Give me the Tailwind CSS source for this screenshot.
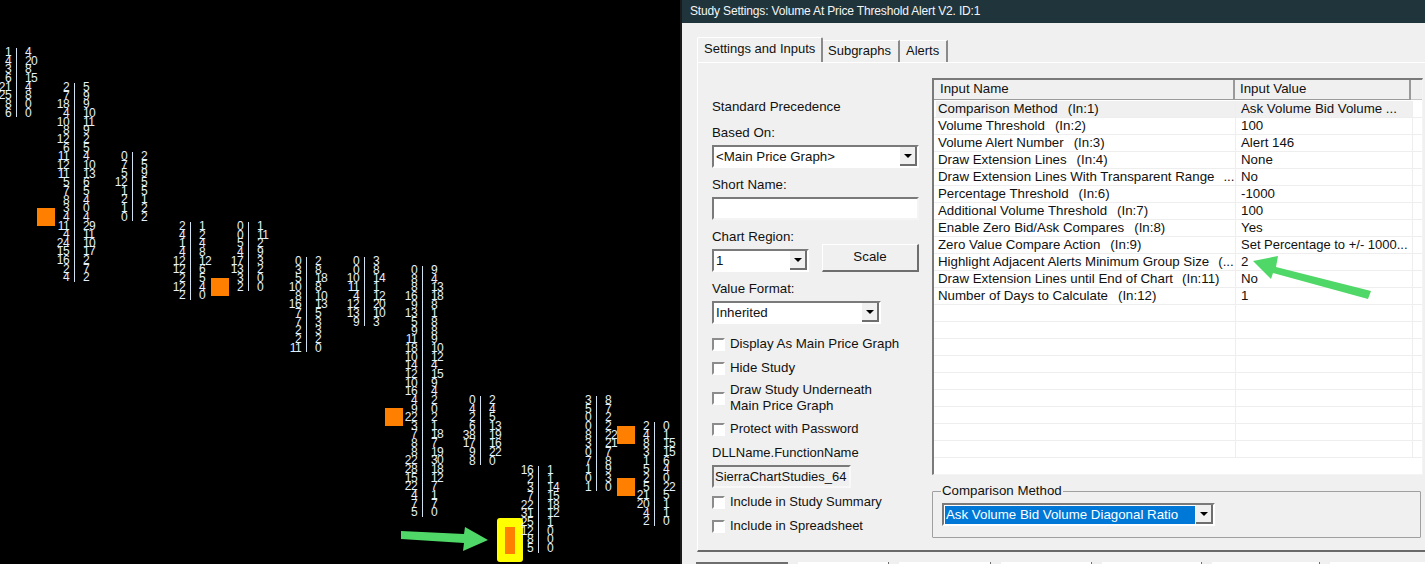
<!DOCTYPE html>
<html lang="en">
<head>
    <meta charset="UTF-8">
    <title>Study Settings</title>
    <script src="https://cdn.jsdelivr.net/npm/@tailwindcss/browser@4"></script>
</head>
<body class="bg-black overflow-hidden">
    <div class="relative flex w-[1425px] h-[564px] overflow-hidden font-['Liberation_Sans',Arial,sans-serif] text-[13.3px] leading-[16px] text-[#111]">

        <!-- footprint chart -->
        <div id="chart" class="relative w-[680px] h-[564px] shrink-0 bg-black">
            <div class="absolute left-[37px] top-[208px] w-[18px] h-[18px] bg-[#ff8000]"></div>
            <div class="absolute left-[211px] top-[278px] w-[18px] h-[18px] bg-[#ff8000]"></div>
            <div class="absolute left-[385px] top-[408px] w-[18px] h-[18px] bg-[#ff8000]"></div>
            <div class="absolute left-[617px] top-[426px] w-[18px] h-[18px] bg-[#ff8000]"></div>
            <div class="absolute left-[617px] top-[478px] w-[18px] h-[18px] bg-[#ff8000]"></div>
            <div class="absolute left-[497px] top-[518px] w-[26px] h-[44px] rounded-[3px] bg-[#ffff00] flex items-center justify-center">
                <div class="w-[10px] h-[27px] bg-[#ff8000]"></div>
            </div>
            <svg class="absolute left-[395px] top-[520px]" width="100" height="36" viewBox="395 520 100 36">
                <polygon points="401,531 464,534 465,527 488,540 463,551 464,543 401,539" fill="#4fd867"/>
            </svg>
        </div>

        <!-- dialog -->
        <div class="flex-1 flex flex-col bg-[#f0f0f0] border-l-2 border-[#1a1a1a]">
            <div class="h-[23px] shrink-0 bg-[#20343c] text-[#f4f6f6] pl-[8px] leading-[23px] text-[12px] tracking-[-0.16px]">Study Settings: Volume At Price Threshold Alert V2. ID:1</div>

            <div class="h-[14px] shrink-0"></div>

            <!-- tabs -->
            <div class="flex h-[25px] shrink-0 ml-[15px] items-end relative z-10">
                <div class="w-[126px] h-[25px] pl-[6px] text-[13px] leading-[22px] bg-[#f0f0f0] border-t border-l border-white border-r-2 border-r-[#8a8a8a] rounded-t-[2px]">Settings and Inputs</div>
                <div class="w-[77px] h-[22px] pl-[5px] text-[13px] leading-[20px] border-t border-white border-r-2 border-r-[#8a8a8a]">Subgraphs</div>
                <div class="w-[48px] h-[22px] pl-[6px] text-[13px] leading-[20px] border-t border-white border-r-2 border-r-[#8a8a8a]">Alerts</div>
            </div>

            <!-- tab page -->
            <div class="h-[490px] shrink-0 ml-[15px] border-l border-t border-white border-b-2 border-b-[#6a6a6a] flex">

                <!-- left column -->
                <div class="w-[207px] ml-[14px] mt-[36px] shrink-0 flex flex-col">
                    <div>Standard Precedence</div>
                    <div class="mt-[10px]">Based On:</div>
                    <div class="mt-[4px] flex h-[23px] w-[207px] bg-white border-2 border-t-[#7a7a7a] border-l-[#7a7a7a] border-r-white border-b-white pl-[2px] leading-[19px]">
                        <span class="flex-1">&lt;Main Price Graph&gt;</span>
                        <span class="w-[17px] h-[19px] bg-[#f0f0f0] border-r-2 border-b-2 border-[#6e6e6e] flex items-center justify-center"><span class="w-0 h-0 border-x-[4px] border-x-transparent border-t-[4px] border-t-black"></span></span>
                    </div>
                    <div class="mt-[9px]">Short Name:</div>
                    <div class="mt-[4px] h-[23px] w-[207px] bg-white border-2 border-t-[#7a7a7a] border-l-[#7a7a7a] border-r-[#f4f4f4] border-b-[#f4f4f4]"></div>
                    <div class="mt-[9px] flex items-end">
                        <div>
                            <div>Chart Region:</div>
                            <div class="mt-[4px] flex h-[23px] w-[97px] bg-white border-2 border-t-[#7a7a7a] border-l-[#7a7a7a] border-r-white border-b-white pl-[2px] leading-[19px]">
                                <span class="flex-1">1</span>
                                <span class="w-[17px] h-[19px] bg-[#f0f0f0] border-r-2 border-b-2 border-[#6e6e6e] flex items-center justify-center"><span class="w-0 h-0 border-x-[4px] border-x-transparent border-t-[4px] border-t-black"></span></span>
                            </div>
                        </div>
                        <div class="ml-[13px] w-[98px] h-[28px] bg-[#f0f0f0] border border-t-white border-l-white border-r-2 border-b-2 border-r-[#6e6e6e] border-b-[#6e6e6e] text-center leading-[24px]">Scale</div>
                    </div>
                    <div class="mt-[9px]">Value Format:</div>
                    <div class="mt-[4px] flex h-[23px] w-[169px] bg-white border-2 border-t-[#7a7a7a] border-l-[#7a7a7a] border-r-white border-b-white pl-[2px] leading-[19px]">
                        <span class="flex-1">Inherited</span>
                        <span class="w-[17px] h-[19px] bg-[#f0f0f0] border-r-2 border-b-2 border-[#6e6e6e] flex items-center justify-center"><span class="w-0 h-0 border-x-[4px] border-x-transparent border-t-[4px] border-t-black"></span></span>
                    </div>
                    <div class="mt-[12px] flex items-center gap-[5px]">
                        <span class="w-[13px] h-[13px] bg-white border-2 border-t-[#8c8c8c] border-l-[#8c8c8c] border-r-white border-b-white"></span>
                        <span>Display As Main Price Graph</span>
                    </div>
                    <div class="mt-[8px] flex items-center gap-[5px]">
                        <span class="w-[13px] h-[13px] bg-white border-2 border-t-[#8c8c8c] border-l-[#8c8c8c] border-r-white border-b-white"></span>
                        <span>Hide Study</span>
                    </div>
                    <div class="mt-[6px] flex items-center gap-[5px]">
                        <span class="w-[13px] h-[13px] bg-white border-2 border-t-[#8c8c8c] border-l-[#8c8c8c] border-r-white border-b-white"></span>
                        <span>Draw Study Underneath<br>Main Price Graph</span>
                    </div>
                    <div class="mt-[7px] flex items-center gap-[5px] text-[13px]">
                        <span class="w-[13px] h-[13px] bg-white border-2 border-t-[#8c8c8c] border-l-[#8c8c8c] border-r-white border-b-white"></span>
                        <span>Protect with Password</span>
                    </div>
                    <div class="mt-[8px] text-[13px]">DLLName.FunctionName</div>
                    <div class="mt-[4px] h-[23px] w-[139px] text-[13px] bg-[#f0f0f0] border-2 border-t-[#7a7a7a] border-l-[#7a7a7a] border-r-[#f8f8f8] border-b-[#f8f8f8] pl-[1px] leading-[19px] overflow-hidden whitespace-nowrap">SierraChartStudies_64</div>
                    <div class="mt-[6px] flex items-center gap-[5px] text-[13px]">
                        <span class="w-[13px] h-[13px] bg-white border-2 border-t-[#8c8c8c] border-l-[#8c8c8c] border-r-white border-b-white"></span>
                        <span>Include in Study Summary</span>
                    </div>
                    <div class="mt-[8px] flex items-center gap-[5px] text-[13px]">
                        <span class="w-[13px] h-[13px] bg-white border-2 border-t-[#8c8c8c] border-l-[#8c8c8c] border-r-white border-b-white"></span>
                        <span>Include in Spreadsheet</span>
                    </div>
                </div>

                <!-- right column -->
                <div class="ml-[13px] mt-[15px] flex-1 min-w-0 pr-[2px] flex flex-col">
                    <div class="h-[397px] bg-white border-2 border-b border-r border-t-[#7a7a7a] border-l-[#7a7a7a] border-r-[#f4f4f4] border-b-[#f4f4f4] overflow-hidden">
                        <div class="flex h-[20px] bg-[#f0f0f0] leading-[18px]">
                            <div class="w-[301px] pl-[6px] border-r-2 border-b border-r-[#9a9a9a] border-b-[#9a9a9a]">Input Name</div>
                            <div class="w-[176px] pl-[5px] border-r-2 border-b border-r-[#9a9a9a] border-b-[#9a9a9a]">Input Value</div>
                            <div class="flex-1 border-b border-b-[#c8c8c8]"></div>
                        </div>
                        <div class="h-[1px]"></div>
                        <div class="flex h-[17px] border-b border-[#eeeeee]"><div class="w-[300px] ml-[2px] pl-[2px] bg-[#f0f0f0] border-r border-[#eeeeee] whitespace-nowrap">Comparison Method<span class="ml-[10px]">(In:1)</span></div><div class="w-[177px] pl-[5px] bg-[#f0f0f0] border-r border-[#eeeeee] whitespace-nowrap">Ask Volume Bid Volume ...</div></div>
                        <div class="flex h-[17px] border-b border-[#eeeeee]"><div class="w-[302px] pl-[4px] border-r border-[#eeeeee] whitespace-nowrap">Volume Threshold<span class="ml-[10px]">(In:2)</span></div><div class="w-[177px] pl-[5px] border-r border-[#eeeeee]">100</div></div>
                        <div class="flex h-[17px] border-b border-[#eeeeee]"><div class="w-[302px] pl-[4px] border-r border-[#eeeeee] whitespace-nowrap">Volume Alert Number<span class="ml-[10px]">(In:3)</span></div><div class="w-[177px] pl-[5px] border-r border-[#eeeeee]">Alert 146</div></div>
                        <div class="flex h-[17px] border-b border-[#eeeeee]"><div class="w-[302px] pl-[4px] border-r border-[#eeeeee] whitespace-nowrap">Draw Extension Lines<span class="ml-[10px]">(In:4)</span></div><div class="w-[177px] pl-[5px] border-r border-[#eeeeee]">None</div></div>
                        <div class="flex h-[17px] border-b border-[#eeeeee]"><div class="w-[302px] pl-[4px] border-r border-[#eeeeee] whitespace-nowrap">Draw Extension Lines With Transparent Range<span class="ml-[9px]">...</span></div><div class="w-[177px] pl-[5px] border-r border-[#eeeeee]">No</div></div>
                        <div class="flex h-[17px] border-b border-[#eeeeee]"><div class="w-[302px] pl-[4px] border-r border-[#eeeeee] whitespace-nowrap">Percentage Threshold<span class="ml-[10px]">(In:6)</span></div><div class="w-[177px] pl-[5px] border-r border-[#eeeeee]">-1000</div></div>
                        <div class="flex h-[17px] border-b border-[#eeeeee]"><div class="w-[302px] pl-[4px] border-r border-[#eeeeee] whitespace-nowrap">Additional Volume Threshold<span class="ml-[10px]">(In:7)</span></div><div class="w-[177px] pl-[5px] border-r border-[#eeeeee]">100</div></div>
                        <div class="flex h-[17px] border-b border-[#eeeeee]"><div class="w-[302px] pl-[4px] border-r border-[#eeeeee] whitespace-nowrap">Enable Zero Bid/Ask Compares<span class="ml-[10px]">(In:8)</span></div><div class="w-[177px] pl-[5px] border-r border-[#eeeeee]">Yes</div></div>
                        <div class="flex h-[17px] border-b border-[#eeeeee]"><div class="w-[302px] pl-[4px] border-r border-[#eeeeee] whitespace-nowrap">Zero Value Compare Action<span class="ml-[10px]">(In:9)</span></div><div class="w-[177px] pl-[5px] border-r border-[#eeeeee] whitespace-nowrap text-[13px]">Set Percentage to +/- 1000...</div></div>
                        <div class="flex h-[17px] border-b border-[#eeeeee]"><div class="w-[302px] pl-[4px] border-r border-[#eeeeee] whitespace-nowrap">Highlight Adjacent Alerts Minimum Group Size<span class="ml-[9px]">(...</span></div><div class="w-[177px] pl-[5px] border-r border-[#eeeeee]">2</div></div>
                        <div class="flex h-[17px] border-b border-[#eeeeee]"><div class="w-[302px] pl-[4px] border-r border-[#eeeeee] whitespace-nowrap">Draw Extension Lines until End of Chart<span class="ml-[9px]">(In:11)</span></div><div class="w-[177px] pl-[5px] border-r border-[#eeeeee]">No</div></div>
                        <div class="flex h-[17px] border-b border-[#eeeeee]"><div class="w-[302px] pl-[4px] border-r border-[#eeeeee] whitespace-nowrap">Number of Days to Calculate<span class="ml-[10px]">(In:12)</span></div><div class="w-[177px] pl-[5px] border-r border-[#eeeeee]">1</div></div>
                        <div id="blank-rows"></div>
                    </div>

                    <!-- comparison method group -->
                    <div class="relative mt-[16px] w-[489px] h-[47px] border border-[#a0a0a0] rounded-[1px]">
                        <span class="absolute left-[8px] top-[-9px] px-[1px] bg-[#f0f0f0]">Comparison Method</span>
                        <div class="mt-[11px] ml-[9px] flex h-[23px] w-[273px] bg-white border-2 border-t-[#7a7a7a] border-l-[#7a7a7a] border-r-white border-b-white pl-[1px] pt-[1px]">
                            <span class="w-[252px] h-[18px] bg-[#0078d7] text-white pl-[1px] leading-[18px] whitespace-nowrap">Ask Volume Bid Volume Diagonal Ratio</span>
                            <span class="w-[17px] h-[19px] ml-[1px] mt-[-1px] bg-[#f0f0f0] border-r-2 border-b-2 border-[#6e6e6e] flex items-center justify-center"><span class="w-0 h-0 border-x-[4px] border-x-transparent border-t-[4px] border-t-black"></span></span>
                        </div>
                    </div>
                </div>
            </div>

            <!-- top edge of the row of buttons below -->
            <div class="h-[10px] shrink-0"></div>
            <div class="flex h-[2px] shrink-0 ml-[14px]">
                <div class="w-[92px] bg-[#6e6e6e]"></div>
                <div class="w-[10px]"></div>
                <div class="w-[91px] bg-white border-r border-[#6e6e6e]"></div>
                <div class="w-[10px]"></div>
                <div class="w-[92px] bg-white border-r border-[#6e6e6e]"></div>
                <div class="w-[10px]"></div>
                <div class="w-[91px] bg-white border-r border-[#6e6e6e]"></div>
                <div class="w-[10px]"></div>
                <div class="w-[100px] bg-white border-r border-[#6e6e6e]"></div>
                <div class="w-[10px]"></div>
                <div class="w-[108px] bg-white border-r border-[#6e6e6e]"></div>
                <div class="w-[10px]"></div>
                <div class="flex-1 bg-white"></div>
            </div>
        </div>

        <!-- green arrow next to the input value -->
        <svg class="absolute left-[1250px] top-[250px]" width="125" height="55" viewBox="1250 250 125 55">
            <polygon points="1253,261 1278,256 1276,267 1371,291 1368,299 1273,273 1271,279" fill="#4fd867"/>
        </svg>
    </div>

    <script>
        // sep x, first row centre y, then "bid|ask" rows
        const columns = [
            [16, 52, '1|4 4|20 3|8 6|15 21|4 25|8 8|0 6|0'],
            [74, 87, '2|5 7|9 18|9 4|10 10|11 8|9 12|2 6|5 11|4 12|10 11|13 5|6 7|5 8|4 3|0 4|4 11|29 4|11 24|10 15|17 16|2 2|7 4|2'],
            [132, 156, '0|2 7|5 5|9 12|5 1|5 2|1 1|2 0|2'],
            [190, 226, '2|1 4|2 1|4 4|8 12|12 12|6 2|5 12|4 2|0'],
            [248, 226, '0|1 0|11 5|2 4|9 17|3 13|2 3|0 2|0'],
            [306, 261, '0|2 3|8 5|18 10|8 8|10 16|13 7|5 7|3 2|3 2|2 11|0'],
            [364, 261, '0|3 0|8 10|14 11|1 4|12 12|20 13|10 9|3'],
            [422, 270, '0|9 8|4 8|13 16|18 9|8 13|1 5|8 9|8 11|9 18|10 10|12 14|4 12|15 10|9 16|4 4|2 9|0 22|2 3|1 7|18 8|7 8|19 22|30 28|18 15|12 22|7 4|1 7|7 5|0'],
            [480, 400, '0|2 4|4 2|5 6|13 38|19 17|16 9|22 8|0'],
            [538, 470, '16|1 2|1 3|14 7|15 22|18 31|12 25|1 12|0 8|0 5|0'],
            [596, 400, '3|8 5|7 0|2 0|2 8|22 3|21 0|7 7|8 1|9 0|3 1|0'],
            [654, 426, '2|0 4|1 8|15 3|15 1|6 5|4 2|0 5|22 21|5 20|1 4|1 2|0']
        ];

        const chart = document.getElementById('chart');
        columns.forEach(function (col) {
            const el = document.createElement('div');
            el.className = 'absolute font-["Liberation_Sans",Arial,sans-serif] text-[12px] tracking-[-0.6px] text-[#e4f0ff]';
            el.style.left = (col[0] - 30) + 'px';
            el.style.top = (col[1] - 4) + 'px';
            col[2].split(' ').forEach(function (pair) {
                const v = pair.split('|');
                const row = document.createElement('div');
                row.className = 'flex h-[8.67px] leading-[8.67px]';
                row.innerHTML = '<span class="w-[30px] pr-[5px] text-right">' + v[0] + '</span>' +
                    '<span class="w-px bg-[#cfe0f0]"></span>' +
                    '<span class="pl-[8px]">' + v[1] + '</span>';
                el.appendChild(row);
            });
            chart.appendChild(el);
        });

        let blanks = '';
        for (let i = 0; i < 9; i++) {
            blanks += '<div class="flex h-[17px] border-b border-[#eeeeee]"><div class="w-[302px] border-r border-[#eeeeee]"></div><div class="w-[177px] border-r border-[#eeeeee]"></div></div>';
        }
        document.getElementById('blank-rows').innerHTML = blanks;
    </script>
</body>
</html>
